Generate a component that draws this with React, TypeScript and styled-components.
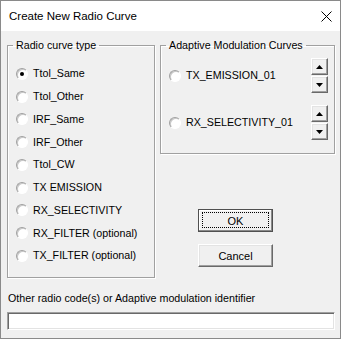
import styled, { createGlobalStyle } from "styled-components";

const GlobalStyle = createGlobalStyle`
  html, body {
    margin: 0;
    padding: 0;
    background: #ffffff;
  }
  body {
    font-family: "Liberation Sans", Arial, sans-serif;
    color: #000;
  }
`;

// whole dialog window
const Window = styled.div`
  width: 341px;
  height: 339px;
  box-sizing: border-box;
  border: 1px solid #8a8a8a;
  background: #f0f0f0;
  display: flex;
  flex-direction: column;
`;

const TitleBar = styled.div`
  height: 30px;
  flex-shrink: 0;
  background: #ffffff;
  display: flex;
  align-items: center;
  justify-content: space-between;
  padding-left: 8px;
  font-size: 11.5px;
`;

const CloseBox = styled.div`
  width: 28px;
  height: 30px;
  display: flex;
  align-items: center;
  justify-content: center;
`;

const Body = styled.div`
  flex: 1;
  padding: 8px 5px 0 6px;
  display: flex;
  flex-direction: column;
  font-size: 10.7px;
`;

const TopRow = styled.div`
  display: flex;
  gap: 5px;
`;

const RightCol = styled.div`
  flex: 1;
  display: flex;
  flex-direction: column;
`;

// etched group box
const Group = styled.fieldset<{ $w?: number }>`
  margin: 0;
  min-width: 0;
  padding: 0 6px 0 8px;
  border: 1px solid #a0a0a0;
  box-shadow: 1px 1px 0 #ffffff, inset 1px 1px 0 #ffffff;
  ${(p) => (p.$w ? `width: ${p.$w}px;` : "")}
  box-sizing: border-box;
`;

const Legend = styled.legend`
  margin-left: -3px;
  padding: 0 3px;
  line-height: 13px;
  font-size: 10.7px;
`;

const RadioList = styled.div`
  margin-top: 10.5px;
  margin-bottom: 10px;
  display: flex;
  flex-direction: column;
`;

const RadioRow = styled.label`
  height: 22.75px;
  display: flex;
  align-items: center;
  gap: 5px;
  line-height: 15px;
  white-space: nowrap;
`;

const RadioCircle = styled.span<{ $checked?: boolean }>`
  width: 12px;
  height: 12px;
  box-sizing: border-box;
  flex-shrink: 0;
  border-radius: 50%;
  border: 1px solid;
  border-color: #a0a0a0 #ffffff #ffffff #a0a0a0;
  box-shadow: inset 1px 1px 0 #c8c8c8;
  background: #ffffff;
  display: flex;
  align-items: center;
  justify-content: center;
  &::after {
    content: "";
    width: 4px;
    height: 4px;
    border-radius: 50%;
    background: ${(p) => (p.$checked ? "#000" : "transparent")};
  }
`;

const AdaptiveList = styled.div`
  margin-top: 6px;
  margin-bottom: 13px;
  display: flex;
  flex-direction: column;
  gap: 12px;
`;

const AdaptiveRow = styled.div`
  display: flex;
  align-items: center;
  justify-content: space-between;
`;

const SpinCol = styled.div`
  display: flex;
  flex-direction: column;
  gap: 1px;
`;

const SpinButton = styled.div`
  width: 17px;
  height: 17px;
  box-sizing: border-box;
  background: #f0f0f0;
  border: 1px solid;
  border-color: #ffffff #696969 #696969 #ffffff;
  box-shadow: inset -1px -1px 0 #a0a0a0, inset 1px 1px 0 #e3e3e3;
  display: flex;
  align-items: center;
  justify-content: center;
`;

const ButtonCol = styled.div`
  margin-top: 55px;
  margin-left: 38px;
  width: 75px;
  display: flex;
  flex-direction: column;
  gap: 12px;
`;

const PushButton = styled.div<{ $default?: boolean }>`
  position: relative;
  height: 23px;
  box-sizing: border-box;
  background: #f0f0f0;
  border: 1px solid;
  border-color: ${(p) =>
    p.$default ? "#505050" : "#ffffff #696969 #696969 #ffffff"};
  box-shadow: ${(p) =>
    p.$default
      ? "inset -1px -1px 0 #8a8a8a, inset 1px 1px 0 #ffffff"
      : "inset -1px -1px 0 #a0a0a0, inset 1px 1px 0 #e3e3e3"};
  display: flex;
  align-items: center;
  justify-content: center;
  font-size: 11px;
  &::after {
    content: "";
    display: ${(p) => (p.$default ? "block" : "none")};
    position: absolute;
    left: 3px;
    right: 3px;
    top: 2px;
    bottom: 3px;
    border: 1px dotted #000;
  }
`;

const FieldLabel = styled.div`
  margin-top: 13px;
  line-height: 14px;
  padding-left: 1px;
`;

const TextBox = styled.div`
  margin-top: 7px;
  height: 18px;
  box-sizing: border-box;
  background: #ffffff;
  border: 1px solid;
  border-color: #a0a0a0 #ffffff #ffffff #a0a0a0;
  box-shadow: inset 1px 1px 0 #696969, inset -1px -1px 0 #e3e3e3;
`;

const curveTypes = [
  "Ttol_Same",
  "Ttol_Other",
  "IRF_Same",
  "IRF_Other",
  "Ttol_CW",
  "TX EMISSION",
  "RX_SELECTIVITY",
  "RX_FILTER (optional)",
  "TX_FILTER (optional)",
];

const adaptive = ["TX_EMISSION_01", "RX_SELECTIVITY_01"];

function Arrow({ up }: { up?: boolean }) {
  return (
    <svg width="7" height="4" viewBox="0 0 7 4">
      {up ? (
        <polygon points="3.5,0 7,4 0,4" fill="#000" />
      ) : (
        <polygon points="0,0 7,0 3.5,4" fill="#000" />
      )}
    </svg>
  );
}

export default function App() {
  return (
    <>
      <GlobalStyle />
      <Window>
        <TitleBar>
          <span>Create New Radio Curve</span>
          <CloseBox>
            <svg width="11" height="11" viewBox="0 0 11 11">
              <path d="M0.5 0.5 L10.5 10.5 M10.5 0.5 L0.5 10.5" stroke="#000" strokeWidth="1" />
            </svg>
          </CloseBox>
        </TitleBar>
        <Body>
          <TopRow>
            <Group $w={148}>
              <Legend>Radio curve type</Legend>
              <RadioList>
                {curveTypes.map((t, i) => (
                  <RadioRow key={t}>
                    <RadioCircle $checked={i === 0} />
                    {t}
                  </RadioRow>
                ))}
              </RadioList>
            </Group>
            <RightCol>
              <Group>
                <Legend>Adaptive Modulation Curves</Legend>
                <AdaptiveList>
                  {adaptive.map((a) => (
                    <AdaptiveRow key={a}>
                      <RadioRow>
                        <RadioCircle />
                        {a}
                      </RadioRow>
                      <SpinCol>
                        <SpinButton>
                          <Arrow up />
                        </SpinButton>
                        <SpinButton>
                          <Arrow />
                        </SpinButton>
                      </SpinCol>
                    </AdaptiveRow>
                  ))}
                </AdaptiveList>
              </Group>
              <ButtonCol>
                <PushButton $default>OK</PushButton>
                <PushButton>Cancel</PushButton>
              </ButtonCol>
            </RightCol>
          </TopRow>
          <FieldLabel>Other radio code(s) or Adaptive modulation identifier</FieldLabel>
          <TextBox />
        </Body>
      </Window>
    </>
  );
}
